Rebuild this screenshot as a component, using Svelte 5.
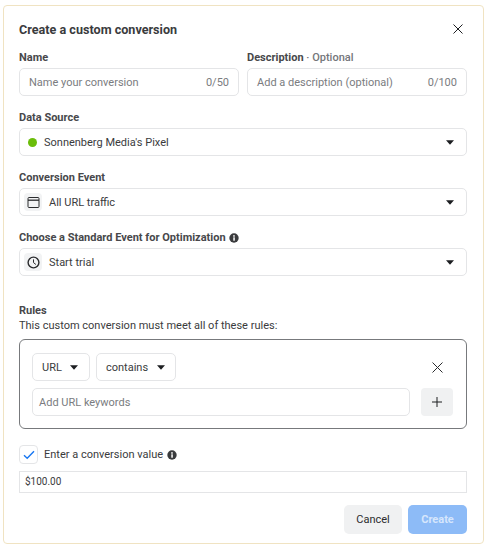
<script>
  const chevron = 'M0 0h8L4 4.4z';
</script>

{#snippet caret()}
  <svg class="caret" width="8" height="5" viewBox="0 0 8 4.4"><path d={chevron} fill="#1c1e21" /></svg>
{/snippet}

{#snippet info()}
  <svg class="info" width="10" height="10" viewBox="0 0 10 10">
    <circle cx="5" cy="5" r="4.7" fill="#3a3b3d" />
    <rect x="4.3" y="4.3" width="1.5" height="3.4" fill="#fff" />
    <circle cx="5" cy="2.9" r="0.85" fill="#fff" />
  </svg>
{/snippet}

<main class="page">
  <section class="card">
    <header class="head">
      <h1>Create a custom conversion</h1>
      <svg width="10" height="10" viewBox="0 0 10 10" class="close"><path d="M.5.5l9 9M9.5.5l-9 9" stroke="#1c1e21" stroke-width="1" fill="none" /></svg>
    </header>

    <div class="two">
      <div class="field">
        <div class="label">Name</div>
        <div class="box">
          <span class="ph grow">Name your conversion</span>
          <span class="ph">0/50</span>
        </div>
      </div>
      <div class="field">
        <div class="label">Description <span class="opt">· Optional</span></div>
        <div class="box">
          <span class="ph grow">Add a description (optional)</span>
          <span class="ph">0/100</span>
        </div>
      </div>
    </div>

    <div class="field">
      <div class="label">Data Source</div>
      <div class="box">
        <span class="dot"></span>
        <span class="val grow">Sonnenberg Media's Pixel</span>
        {@render caret()}
      </div>
    </div>

    <div class="field">
      <div class="label">Conversion Event</div>
      <div class="box iconed">
        <span class="tile">
          <svg width="13" height="13" viewBox="0 0 13 13" fill="none" stroke="#2b2c2e" stroke-width="1"><rect x="1" y="1.5" width="11" height="10" rx="1" /><path d="M1 4.2h11" stroke-width="1.3" /></svg>
        </span>
        <span class="val grow">All URL traffic</span>
        {@render caret()}
      </div>
    </div>

    <div class="field">
      <div class="label">Choose a Standard Event for Optimization {@render info()}</div>
      <div class="box iconed">
        <span class="tile">
          <svg width="13" height="13" viewBox="0 0 13 13" fill="none" stroke="#2b2c2e"><circle cx="6.5" cy="6.5" r="5.4" stroke-width="1.4" /><path d="M6.5 3.4v3.2l2.4 1.9" stroke-width="1" /></svg>
        </span>
        <span class="val grow">Start trial</span>
        {@render caret()}
      </div>
    </div>

    <div class="rules-head">
      <div class="label">Rules</div>
      <p>This custom conversion must meet all of these rules:</p>
    </div>

    <div class="rules">
      <div class="rule-top">
        <div class="box small url"><span class="val">URL</span>{@render caret()}</div>
        <div class="box small op"><span class="val">contains</span>{@render caret()}</div>
        <svg class="remove" width="11" height="11" viewBox="0 0 11 11"><path d="M.5.5l10 10M10.5.5l-10 10" stroke="#2b2c2e" stroke-width="1" fill="none" /></svg>
      </div>
      <div class="rule-bottom">
        <div class="box kw"><span class="ph">Add URL keywords</span></div>
        <button class="plus" aria-label="Add">
          <svg width="10" height="10" viewBox="0 0 10 10"><path d="M5 0v10M0 5h10" stroke="#1c1e21" stroke-width="1" fill="none" /></svg>
        </button>
      </div>
    </div>

    <div class="check-row">
      <span class="check">
        <svg width="12" height="10" viewBox="0 0 12 10"><path d="M1 5.2l3.2 3L11 1.2" stroke="#1877f2" stroke-width="1.4" fill="none" /></svg>
      </span>
      <span class="val">Enter a conversion value</span>
      {@render info()}
    </div>

    <div class="amount">$100.00</div>

    <footer class="foot">
      <button class="btn cancel">Cancel</button>
      <button class="btn create">Create</button>
    </footer>
  </section>
</main>

<style>
  :global(body) {
    margin: 0;
    background: #fff;
    font-family: Roboto, "Liberation Sans", sans-serif;
    color: #1c1e21;
  }
  .page {
    width: 489px;
    height: 549px;
    box-sizing: border-box;
    padding: 5px 5px 5px 3px;
  }
  .card {
    box-sizing: border-box;
    width: 481px;
    height: 539px;
    border: 1px solid #f0e3c2;
    border-radius: 4px;
    padding: 12px 16px 9px 15px;
    display: flex;
    flex-direction: column;
  }
  .head {
    display: flex;
    justify-content: space-between;
    align-items: center;
    height: 22px;
    margin-bottom: 10px;
  }
  h1 {
    margin: 0;
    font-size: 12.6px;
    font-weight: 700;
    color: #3a3b3d;
  }
  .close { margin-right: 4px; }
  .two {
    display: grid;
    grid-template-columns: 220px 220px;
    column-gap: 8px;
  }
  .field { margin-bottom: 14px; }
  .label {
    height: 18px;
    font-size: 11px;
    font-weight: 700;
    color: #47484b;
    line-height: 16px;
  }
  .opt { color: #74767a; font-weight: 500; }
  .info { flex: none; vertical-align: -1.5px; margin-left: 1px; }
  .box {
    box-sizing: border-box;
    height: 28px;
    border: 1px solid #e4e5e7;
    border-radius: 5px;
    display: flex;
    align-items: center;
    padding: 0 9px;
    background: #fff;
  }
  .grow { flex: 1; }
  .ph { font-size: 11px; color: #7a7c80; }
  .val { font-size: 11px; color: #3a3b3d; }
  .dot {
    width: 9px;
    height: 9px;
    border-radius: 50%;
    background: #6bbd0a;
    margin: 0 7px 0 -1px;
  }
  .iconed { padding-left: 4px; }
  .tile {
    width: 18px;
    height: 18px;
    background: #f2f3f4;
    border-radius: 4px;
    display: grid;
    place-items: center;
    margin-right: 7px;
  }
  .caret { flex: none; margin-right: 3px; }
  .rules-head { margin-top: 13px; height: 36px; }
  .rules-head .label { height: 15px; }
  .rules-head p { margin: 0; font-size: 11px; line-height: 15px; color: #3a3b3d; }
  .rules {
    box-sizing: border-box;
    height: 90px;
    border: 1px solid #77797c;
    border-radius: 6px;
    padding: 13px 13px 12px 12px;
    display: flex;
    flex-direction: column;
    gap: 7px;
  }
  .rule-top { display: flex; align-items: center; gap: 6px; }
  .small { justify-content: space-between; padding: 0 9px 0 9px; }
  .url { width: 58px; }
  .op { width: 80px; }
  .small .caret { margin-right: 2px; }
  .op.small { padding-right: 8px; }
  .remove { margin-left: auto; margin-right: 10px; }
  .rule-bottom { display: flex; gap: 11px; }
  .kw { flex: 1; padding: 0 6px; }
  .plus {
    width: 32px;
    height: 28px;
    border: 0;
    border-radius: 4px;
    background: #f0f1f2;
    display: grid;
    place-items: center;
    padding: 0;
  }
  .check-row {
    display: flex;
    align-items: center;
    gap: 6px;
    margin-top: 16px;
    height: 19px;
  }
  .check {
    box-sizing: border-box;
    width: 19px;
    height: 19px;
    border: 1px solid #e4e5e7;
    border-radius: 4px;
    display: grid;
    place-items: center;
  }
  .check-row .info { margin-left: -2px; vertical-align: 0; }
  .amount {
    box-sizing: border-box;
    height: 22px;
    margin-top: 7px;
    border: 1px solid #e4e5e7;
    font-size: 10px;
    line-height: 20px;
    padding-left: 5px;
    color: #3a3b3d;
  }
  .foot {
    display: flex;
    justify-content: flex-end;
    gap: 6px;
    margin-top: 12px;
  }
  .btn {
    height: 29px;
    border: 0;
    border-radius: 5px;
    font-family: inherit;
    font-size: 11px;
    padding: 0;
  }
  .cancel { width: 58px; background: #f0f1f2; color: #2b2c2e; }
  .create { width: 59px; background: #8dbbf7; color: #d6e6fc; font-weight: 700; }
</style>
